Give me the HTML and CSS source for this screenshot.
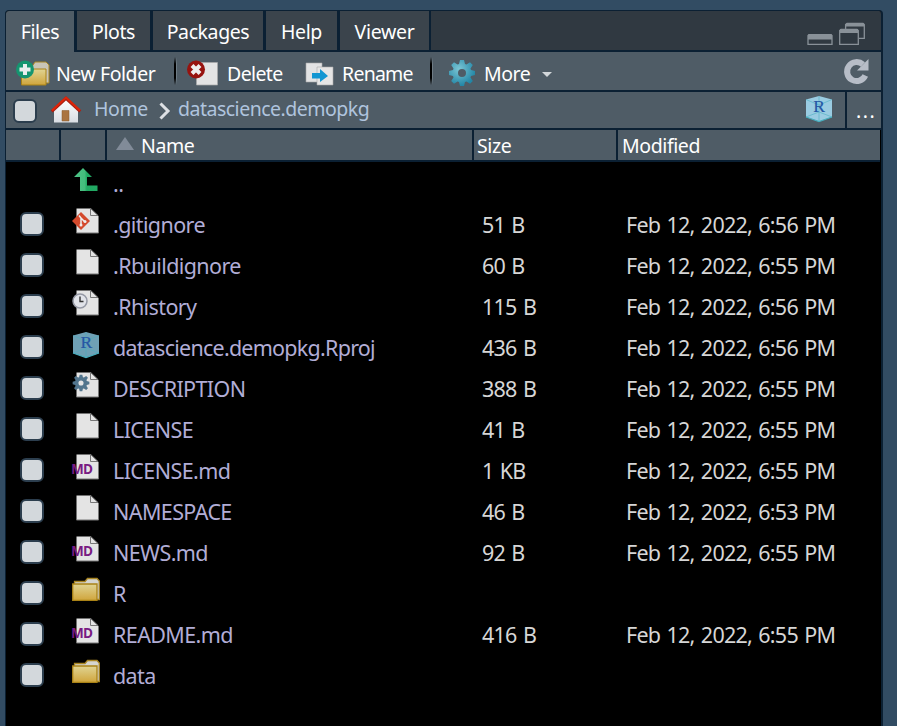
FILE: index.html
```html
<!DOCTYPE html>
<html lang="en">
<head>
<meta charset="utf-8">
<title>Files</title>
<link rel="stylesheet" href="styles.css">
</head>
<body>
<svg class="defs" width="0" height="0">
  <defs>
    <linearGradient id="gold" x1="0" y1="0" x2="0" y2="1"><stop offset="0" stop-color="#e0d493"/><stop offset="1" stop-color="#d0a53c"/></linearGradient>
    <linearGradient id="wall" x1="0" y1="0" x2="0" y2="1"><stop offset="0" stop-color="#fff"/><stop offset="1" stop-color="#d9dde3"/></linearGradient>
    <linearGradient id="leaf" x1="0" x2="1"><stop offset="0" stop-color="#4fc488"/><stop offset=".45" stop-color="#43bc7c"/><stop offset=".55" stop-color="#20a862"/><stop offset="1" stop-color="#22a963"/></linearGradient>
    <radialGradient id="teal" gradientUnits="userSpaceOnUse" cx="-3" cy="-4" r="17"><stop offset="0" stop-color="#7cc6d5"/><stop offset="1" stop-color="#2286a6"/></radialGradient>
    <symbol id="page" viewBox="0 0 28 28"><path d="M4.500 .5H19L26.500 8V25H4.500Z" fill="#e4e4e4"/><path d="M18.500 .5V7.500H26M18.500 .5L26 7.500M26.500 8V25H4.500" fill="none" stroke="#777" stroke-width="1"/></symbol>
    <symbol id="folder" viewBox="0 0 28 28"><path d="M2.500 7V4.500H13L15.500 1.500H25L27.300 4V22.500H24" fill="#d5d5d0" stroke="#a88522" stroke-width="1.300"/><path d="M.7 7H25V23.300H.7Z" fill="url(#gold)" stroke="#a98216" stroke-width="1.300"/></symbol>
    <symbol id="cube" viewBox="0 0 28 28"><path d="M14 1L27 4.500V22L14 26.500L1 22V4.500Z" fill="currentColor"/><path d="M14 1V26.500M1 4.500L14 10L27 4.500M1 22L14 17L27 22" fill="none" stroke="#48aebe" stroke-width=".8" opacity=".7"/><path d="M1 22L14 26.500L27 22" fill="none" stroke="#48aebe" stroke-width="1.200"/><text x="14" y="17" text-anchor="middle" font-family="Liberation Serif, serif" font-size="17.500" fill="#2458a5" stroke="#2458a5" stroke-width=".2">R</text></symbol>
    <symbol id="cog" viewBox="-14 -14 28 28"><path fill-rule="evenodd" d="M-3-9L-2-13H2L3-9L4.500-8.500L8-10.800L10.800-8L8.500-4.500L9-3L13-2V2L9 3L8.500 4.500L10.800 8L8 10.800L4.500 8.500L3 9L2 13H-2L-3 9L-4.500 8.500L-8 10.800L-10.800 8L-8.500 4.500L-9 3L-13 2V-2L-9-3L-8.500-4.500L-10.800-8L-8-10.800L-4.500-8.500ZM4 0A4 4 0 1 0-4 0A4 4 0 1 0 4 0Z"/></symbol>
  </defs>
</svg>
<main class="pane">
  <nav class="tabs">
    <a class="tab tab-files active"><span>Files</span></a>
    <a class="tab tab-plots"><span>Plots</span></a>
    <a class="tab tab-packages"><span>Packages</span></a>
    <a class="tab tab-help"><span>Help</span></a>
    <a class="tab tab-viewer"><span>Viewer</span></a>
    <svg class="window-buttons" width="60" height="24" viewBox="0 0 60 24" fill="none" stroke="#899198" stroke-width="1.300">
      <path d="M1 22.300V13.500L2 12.700H24L25 13.500V22.300Z"/><path d="M1 15H25" stroke-width="5"/>
      <path d="M38.600 7V2.500L40 1.500H56L57.300 2.500V16.300H52"/><path d="M39 3H57" stroke-width="3"/>
      <path d="M32.700 22.300V8.500L34 7.500H50L51.300 8.500V22.300Z"/><path d="M33 9H51" stroke-width="4"/>
    </svg>
  </nav>
  <div class="toolbar">
    <svg class="ico-new" width="36" height="30" viewBox="0 0 36 30"><path d="M15 8L19 2H30L33 5V23H29" fill="#c9c5b7" stroke="#a88522"/><path d="M5.500 9H30V25H5.500Z" fill="url(#gold)" stroke="#a98216"/><circle cx="9" cy="9.500" r="9" fill="#159570"/><path d="M9 4V15M3.500 9.500H14.500" stroke="#e9eeee" stroke-width="4"/></svg>
    <span class="label l-new">New Folder</span>
    <i class="sep"></i>
    <svg class="ico-delete" width="32" height="30" viewBox="0 0 32 30"><path d="M9.500 3.500H30.500V26H9.500Z" fill="#e4e4e4" stroke="#aaa" stroke-width=".7"/><circle cx="9" cy="10.500" r="9" fill="#97130f"/><path d="M5 6.500L13 14.500M13 6.500L5 14.500" stroke="#eee" stroke-width="4"/></svg>
    <span class="label l-delete">Delete</span>
    <svg class="ico-rename" width="30" height="28" viewBox="0 0 30 28"><path d="M1 3H17V22H1Z" fill="#e2e3e4" stroke="#aaa" stroke-width=".6"/><path d="M12 7H28V25H12Z" fill="#e5e5e5" stroke="#aaa" stroke-width=".6"/><path d="M7 13H15V9L23 16L15 22V18.500H7Z" fill="#1296d2"/></svg>
    <span class="label l-rename">Rename</span>
    <i class="sep sep-2"></i>
    <svg class="ico-more" width="28" height="28"><use href="#cog" fill="url(#teal)"/></svg>
    <span class="label l-more">More</span>
    <i class="caret"></i>
    <svg class="ico-refresh" width="28" height="28" viewBox="0 0 28 28"><path d="M22.300 17.500A9.500 9.500 0 1 1 20 6.500" fill="none" stroke="#b7bdc7" stroke-width="6"/><path d="M14 12.500H25.500V1Z" fill="#b7bdc7"/></svg>
  </div>
  <div class="pathbar">
    <i class="check"></i>
    <svg class="ico-home" width="32" height="28" viewBox="0 0 32 28"><path d="M4 13L16 2L28 13V26.500H4Z" fill="url(#wall)"/><path d="M12 25V14.500H19V25Z" fill="#aa7440" stroke="#87582d" stroke-width=".5"/><path d="M1.800 15.500L16 2.300L30.200 15.500" fill="none" stroke="#a82014" stroke-width="3"/><path d="M2 14.500L16 1.500L30 14.500" fill="none" stroke="#df2408" stroke-width="2"/></svg>
    <a class="crumb c-home">Home</a>
    <svg class="ico-chevron" width="12" height="18" viewBox="0 0 12 18"><path d="M1.500 1.500L9 9L1.500 16.500" fill="none" stroke="#dde0e4" stroke-width="3"/></svg>
    <a class="crumb c-pkg">datascience.demopkg</a>
    <svg class="ico-cube" width="28" height="28"><use href="#cube"/></svg>
    <span class="dots">...</span>
  </div>
  <div class="head">
    <span></span><span></span>
    <span class="h-name"><i class="sort"></i><b>Name</b></span>
    <span class="h-size"><b>Size</b></span><span class="h-mod"><b>Modified</b></span>
  </div>
  <div class="rows">
    <div class="row up"><i></i><svg class="icon" viewBox="0 0 28 28"><path d="M11 1L20 10H15V18.500H25.500V24H8V10H2Z" fill="url(#leaf)"/></svg><a>..</a></div>
    <div class="row"><i class="check"></i><svg class="icon" viewBox="0 0 28 28"><use href="#page"/><path d="M9 4L18 13L9 22L0 13Z" fill="#d44a2d"/><path d="M7 7.500L9 10V17M9 10L12.500 13.500" fill="none" stroke="#eee" stroke-width="1.500"/><circle cx="9" cy="17" r="1.500" fill="#eee"/><circle cx="13" cy="13.500" r="1.500" fill="#eee"/></svg><a>.gitignore</a><span>51 B</span><time>Feb 12, 2022, 6:56 PM</time></div>
    <div class="row"><i class="check"></i><svg class="icon"><use href="#page"/></svg><a>.Rbuildignore</a><span>60 B</span><time>Feb 12, 2022, 6:55 PM</time></div>
    <div class="row"><i class="check"></i><svg class="icon" viewBox="0 0 28 28"><use href="#page"/><circle cx="8" cy="11" r="7" fill="#e1e3e9" stroke="#9599a5" stroke-width="1.500"/><path d="M8 6.500V11.500H11.500" fill="none" stroke="#333" stroke-width="1.400"/></svg><a>.Rhistory</a><span>115 B</span><time>Feb 12, 2022, 6:56 PM</time></div>
    <div class="row"><i class="check"></i><svg class="icon dim"><use href="#cube"/></svg><a class="long">datascience.demopkg.Rproj</a><span>436 B</span><time>Feb 12, 2022, 6:56 PM</time></div>
    <div class="row"><i class="check"></i><svg class="icon" viewBox="0 0 28 28"><use href="#page"/><use href="#cog" x="0" y="2" width="18" height="18" fill="#52758d"/></svg><a>DESCRIPTION</a><span>388 B</span><time>Feb 12, 2022, 6:55 PM</time></div>
    <div class="row"><i class="check"></i><svg class="icon"><use href="#page"/></svg><a>LICENSE</a><span>41 B</span><time>Feb 12, 2022, 6:55 PM</time></div>
    <div class="row"><i class="check"></i><svg class="icon" viewBox="0 0 28 28"><use href="#page"/><text class="md" x="-1" y="20">MD</text></svg><a>LICENSE.md</a><span>1 KB</span><time>Feb 12, 2022, 6:55 PM</time></div>
    <div class="row"><i class="check"></i><svg class="icon"><use href="#page"/></svg><a class="wide">NAMESPACE</a><span>46 B</span><time>Feb 12, 2022, 6:53 PM</time></div>
    <div class="row"><i class="check"></i><svg class="icon" viewBox="0 0 28 28"><use href="#page"/><text class="md" x="-1" y="20">MD</text></svg><a>NEWS.md</a><span>92 B</span><time>Feb 12, 2022, 6:55 PM</time></div>
    <div class="row"><i class="check"></i><svg class="icon"><use href="#folder"/></svg><a>R</a></div>
    <div class="row"><i class="check"></i><svg class="icon" viewBox="0 0 28 28"><use href="#page"/><text class="md" x="-1" y="20">MD</text></svg><a>README.md</a><span>416 B</span><time>Feb 12, 2022, 6:55 PM</time></div>
    <div class="row"><i class="check"></i><svg class="icon"><use href="#folder"/></svg><a>data</a></div>
  </div>
</main>
</body>
</html>
```
FILE: styles.css
```css
* { box-sizing: border-box; }
html, body { height: 100%; }
body {
  margin: 0;
  padding: 10px 14px 0 5px;
  background: #324c63;
  font-family: "Noto Sans", "Open Sans", sans-serif;
  font-size: 19.500px;
  color: #fff;
  overflow: hidden;
}
.defs { position: absolute; }
svg { flex: none; display: block; }
i { flex: none; }
b { font-weight: 400; }
.pane {
  display: flex;
  flex-direction: column;
  height: 100%;
  background: #000;
  border: 1px solid #0b2033;
  border-right-width: 2px;
  border-bottom: 0;
  border-radius: 4px 4px 0 0;
  overflow: hidden;
}
.tabs {
  display: flex;
  height: 41px;
  background: #303941;
  border-bottom: 2px solid #0b2033;
}
.tab {
  display: flex;
  justify-content: center;
  align-items: center;
  background: #3b444c;
  border-right: 3px solid #0b2033;
  height: 39px;
  padding-top: 1px;
  letter-spacing: -.4px;
}
.tab-files { width: 71px; }
.active { background: #4f5c66; height: 41px; padding-bottom: 2px; border-radius: 3px 0 0; }
.tab-plots { width: 76px; }
.tab-packages { width: 113px; }
.tab-help { width: 74px; }
.tab-viewer { width: 91px; border-right-width: 2px; letter-spacing: -.3px; }
.window-buttons { margin: 11px 14px 0 auto; }
.toolbar {
  display: flex;
  align-items: flex-start;
  height: 40px;
  background: #4f5c66;
  border-bottom: 2px solid #0b2033;
}
.label { line-height: 28px; margin-top: 8px; white-space: nowrap; flex: none; letter-spacing: -.45px; }
.ico-new { margin: 8px 0 0 10px; }
.l-new { width: 118px; margin-left: 4px; }
.sep {
  width: 3px;
  height: 28px;
  margin-top: 5px;
  background: linear-gradient(90deg, #000 0 2px, #6f7c85 2px 3px);
  mask-image: linear-gradient(transparent, #000 25% 75%, transparent);
}
.ico-delete { margin: 7px 0 0 10px; }
.l-delete { width: 78px; margin-left: 8px; letter-spacing: -.6px; }
.ico-rename { margin-top: 8px; }
.l-rename { width: 88px; margin-left: 7px; letter-spacing: -.75px; }
.ico-more { margin: 7px 0 0 15px; }
.l-more { width: 58px; margin-left: 8px; }
.caret { margin-top: 20px; border: 5px solid transparent; border-top-color: #d3d7da; border-bottom: 0; }
.ico-refresh { margin: 6px 10px 0 auto; }
.pathbar {
  display: flex;
  height: 38px;
  background: #4f5c66;
  border-bottom: 2px solid #0b2033;
}
.check {
  width: 24px;
  height: 24px;
  background: #d3d8dc;
  border: 2px solid #2c3e4e;
  border-radius: 6px;
}
.pathbar .check { margin: 7px 0 0 7px; }
.ico-home { margin: 4px 0 0 13px; }
.crumb { color: #afc4de; line-height: 32px; margin-top: 1px; }
.c-home { margin-left: 12px; width: 65px; letter-spacing: -.4px; }
.ico-chevron { margin-top: 10px; }
.c-pkg { margin-left: 7px; letter-spacing: -.5px; }
.ico-cube { margin: 3px 12px 0 auto; color: #9acce2; }
.dots {
  width: 36px;
  padding-left: 9px;
  line-height: 38px;
  letter-spacing: 1.500px;
  border-left: 2px solid #0b2033;
}
.head {
  display: grid;
  grid-template-columns: 55px 46px 367px 144px 1fr;
  height: 32px;
  margin-right: 1px;
  background: #4f5c66;
  border-bottom: 2px solid #0b2033;
}
.head > span { display: flex; border-right: 2px solid #0b2033; padding-left: 3px; line-height: 31px; letter-spacing: -.4px; }
.head > .h-mod { border-right: 0; padding-left: 4px; }
.sort { margin: 7px 7px 0 6px; height: 0; border: 9px solid transparent; border-bottom: 13px solid #818b98; border-top: 0; }
.row {
  display: grid;
  grid-template-columns: 66px 41px 369px 144px 1fr;
  height: 41px;
  font-size: 21.500px;
  line-height: 41px;
  letter-spacing: -.6px;
  color: #d6d6d6;
  white-space: nowrap;
}
.row .check { margin: 9px 0 0 14px; }
.row a { color: #b1add6; }
.row .long { letter-spacing: -.75px; }
.row > a, .row > span, .row > time { padding-top: 1px; }
.row > span, .row > time { letter-spacing: -.75px; word-spacing: 1.400px; }
.icon { width: 28px; height: 28px; margin-top: 5px; overflow: visible; }
.dim { color: #6fa0b5; }
.md { font: 700 13.500px "Open Sans", sans-serif; letter-spacing: -.8px; fill: #791b82; }
```
